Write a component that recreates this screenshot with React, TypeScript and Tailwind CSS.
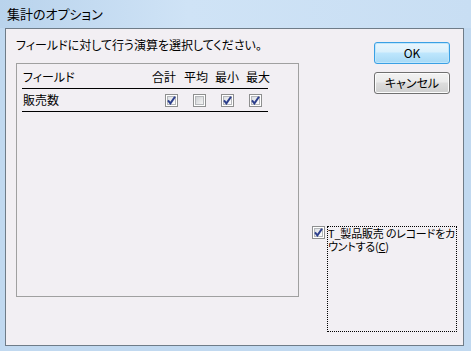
import React from "react";

const jp = { fontFamily: '"Noto Sans CJK JP", "Noto Sans", sans-serif' };

function Check({ checked }: { checked: boolean }) {
  return (
    <div className="w-[13px] h-[13px] border border-[#8e8f8f] bg-white p-[1px] shrink-0">
      <div
        className={
          "w-full h-full border border-[#b5b7ba] flex items-center justify-center " +
          (checked ? "bg-gradient-to-br from-[#dcdfe3] to-[#ffffff]" : "bg-gradient-to-br from-[#cfd1d4] to-[#f4f4f4]")
        }
      >
        {checked && (
          <svg width="9" height="9" viewBox="0 0 9 9" className="shrink-0">
            <path d="M1 4.4 L3.4 7.4 L8 0.8" fill="none" stroke="#2d3f8c" strokeWidth="2" />
          </svg>
        )}
      </div>
    </div>
  );
}

function Button({ label, primary }: { label: string; primary?: boolean }) {
  return (
    <div
      className={
        "w-[76px] h-[22px] rounded-[3px] border flex items-center justify-center text-[12px] text-black " +
        (primary
          ? "border-[#3aa0e4] shadow-[inset_0_0_0_1px_#bfe6fb] bg-[linear-gradient(#eaf6fd_0%,#d9f0fc_45%,#bee6fd_50%,#a7d9f5_100%)]"
          : "border-[#707070] shadow-[inset_0_0_0_1px_#fcfcfc] bg-[linear-gradient(#f2f2f2_0%,#ebebeb_45%,#dddddd_50%,#cfcfcf_100%)]")
      }
      style={jp}
    >
      {label}
    </div>
  );
}

export default function App() {
  return (
    <div
      className="w-[471px] h-[351px] bg-[#c1d9f0] flex flex-col overflow-hidden [font-feature-settings:'palt']"
      style={jp}
    >
      <div className="h-[28px] shrink-0 flex items-center pl-[7px] text-[13px] text-black bg-[linear-gradient(90deg,#b9d3ec,#cfe3f6_40%,#c8def3)]">
        集計のオプション
      </div>
      <div className="flex-1 pl-[5px] pr-[7px] pb-[5px] flex">
        <div className="flex-1 border border-[#6f7c88] bg-[#f2eff3] flex text-[12px] text-black">
          <div className="ml-[10px] w-[283px] flex flex-col">
            <div className="mt-[8px] h-[16px] leading-[16px]">フィールドに対して行う演算を選択してください。</div>
            <div className="mt-[10px] h-[234px] border border-[#a0a0a0] flex flex-col pl-[6px]">
              <div className="mt-[5px] h-[16px] leading-[16px] flex">
                <span className="w-[129px]">フィールド</span>
                <span className="w-[32px]">合計</span>
                <span className="w-[31px]">平均</span>
                <span className="w-[31px]">最小</span>
                <span>最大</span>
              </div>
              <div className="mt-[3px] w-[246px] h-[1px] bg-black -ml-[1px]" />
              <div className="h-[22px] flex items-center">
                <span className="w-[142px]">販売数</span>
                <div className="flex gap-[15px]">
                  <Check checked />
                  <Check checked={false} />
                  <Check checked />
                  <Check checked />
                </div>
              </div>
              <div className="w-[246px] h-[1px] bg-black -ml-[1px]" />
            </div>
          </div>
          <div className="ml-[13px] flex flex-col">
            <div className="ml-[62px] mt-[13px] flex flex-col gap-[8px]">
              <Button label="OK" primary />
              <Button label="キャンセル" />
            </div>
            <div className="mt-[132px] flex items-start">
              <Check checked />
              <div className="ml-[2px] w-[130px] h-[106px] border border-dotted border-black text-[11px] leading-[13px] whitespace-nowrap tracking-[-0.2px]">
                <div>T_製品販売 のレコードをカ</div>
                <div>
                  ウントする(<span className="underline">C</span>)
                </div>
              </div>
            </div>
          </div>
        </div>
      </div>
    </div>
  );
}
